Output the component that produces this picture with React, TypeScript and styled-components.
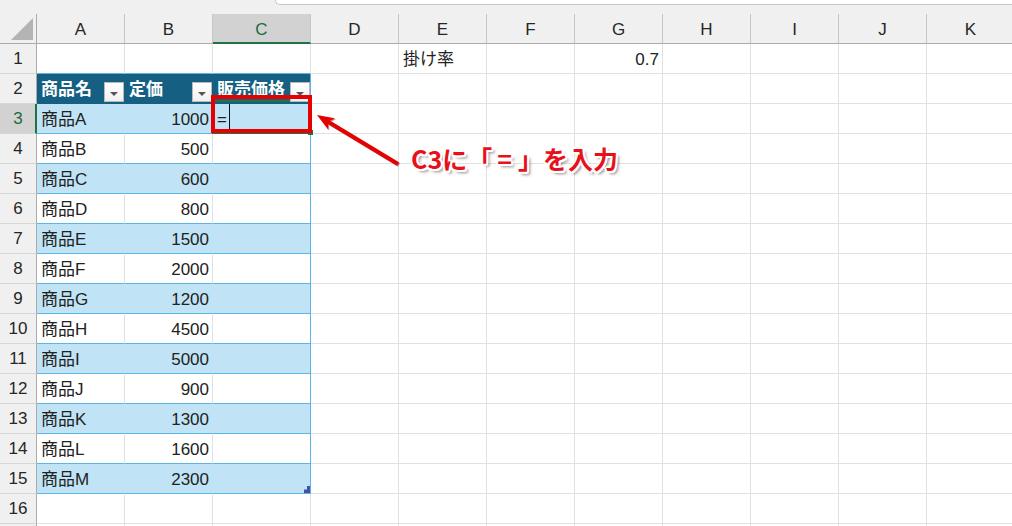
import React from 'react';
import styled, { createGlobalStyle, css } from 'styled-components';

const GlobalStyle = createGlobalStyle`
  html, body { margin: 0; padding: 0; background: #ffffff; }
  body {
    width: 1012px;
    height: 526px;
    overflow: hidden;
    font-family: "Liberation Sans", "Noto Sans CJK JP", sans-serif;
  }
  * { box-sizing: border-box; }
`;

const FONT = `"Liberation Sans", "Noto Sans CJK JP", sans-serif`;
const GREEN = '#217346';
const TABLE_HEAD = '#156082';
const TABLE_BAND = '#c0e4f5';
const TABLE_LINE = '#5cb5e4';
const GRID = '#e1e1e1';
const RED = '#e60000';

const Page = styled.div`
  position: relative;
  width: 1012px;
  height: 526px;
  overflow: hidden;
  background: #ffffff;
`;

const TopStrip = styled.div`
  display: flex;
  height: 14px;
  background: #f0f0f0;
`;

const FormulaEdge = styled.div`
  flex: 1;
  margin-left: 275px;
  height: 5px;
  background: #ffffff;
  border-left: 1px solid #c6c6c6;
  border-bottom: 1px solid #c6c6c6;
  border-bottom-left-radius: 5px;
`;

const Sheet = styled.div`
  display: grid;
  grid-template-columns: 37px 88px 88px 98px repeat(8, 88px);
  grid-auto-rows: 30px;
  font-family: ${FONT};
  font-size: 17px;
  color: #222222;
`;

const Corner = styled.div`
  position: relative;
  background: #f0f0f0;
  border-right: 1px solid #ababab;
  border-bottom: 1px solid #ababab;
`;

const CornerTriangle = styled.span`
  position: absolute;
  left: 11px;
  top: 4px;
  width: 22px;
  height: 22px;
  background: #b4b4b4;
  clip-path: polygon(100% 0, 100% 100%, 0 100%);
`;

const ColHeader = styled.div<{ $selected?: boolean }>`
  display: flex;
  align-items: center;
  justify-content: center;
  padding-top: 2px;
  background: #f0f0f0;
  border-right: 1px solid #c6c6c6;
  border-bottom: 1px solid #ababab;
  color: #262626;
  ${(p) =>
    p.$selected &&
    css`
      background: #d2d2d2;
      color: #1d6a40;
      border-bottom: 2px solid ${GREEN};
      padding-top: 3px;
    `}
`;

const RowHeader = styled.div<{ $selected?: boolean }>`
  display: flex;
  align-items: center;
  justify-content: center;
  padding-top: 1px;
  background: #f0f0f0;
  border-right: 1px solid #ababab;
  border-bottom: 1px solid #d6d6d6;
  color: #262626;
  ${(p) =>
    p.$selected &&
    css`
      background: #d2d2d2;
      color: #1d6a40;
      border-right: 2px solid ${GREEN};
      padding-left: 1px;
    `}
`;

type Kind = 'plain' | 'head' | 'band' | 'row';

const Cell = styled.div<{
  $kind?: Kind;
  $align?: 'left' | 'right';
  $tableEdge?: boolean;
  $aboveTable?: boolean;
}>`
  position: relative;
  display: flex;
  align-items: center;
  justify-content: ${(p) => (p.$align === 'right' ? 'flex-end' : 'flex-start')};
  padding: 1px 3px 0 4px;
  line-height: 1;
  white-space: nowrap;
  background: #ffffff;
  border-right: 1px solid ${GRID};
  border-bottom: 1px solid ${(p) => (p.$aboveTable ? TABLE_LINE : GRID)};
  ${(p) =>
    p.$kind === 'head' &&
    css`
      background: ${TABLE_HEAD};
      color: #ffffff;
      font-weight: 700;
      padding-right: 0;
      justify-content: space-between;
      border-right-color: ${TABLE_HEAD};
      border-bottom-color: ${TABLE_HEAD};
    `}
  ${(p) =>
    p.$kind === 'band' &&
    css`
      background: ${TABLE_BAND};
      border-right-color: ${TABLE_BAND};
      border-bottom-color: ${TABLE_LINE};
    `}
  ${(p) =>
    p.$kind === 'row' &&
    css`
      border-bottom-color: ${TABLE_LINE};
    `}
  ${(p) =>
    p.$tableEdge &&
    css`
      border-right-color: ${TABLE_LINE};
    `}
`;

const FilterButton = styled.span`
  position: relative;
  z-index: 2;
  align-self: flex-end;
  flex: none;
  width: 20px;
  height: 20px;
  margin-bottom: 1px;
  background: linear-gradient(#ffffff, #f1f1f1);
  border: 1px solid #b9b9b9;
  display: flex;
  align-items: center;
  justify-content: center;

  &::after {
    content: '';
    margin-top: 3px;
    border-left: 4px solid transparent;
    border-right: 4px solid transparent;
    border-top: 4px solid #555555;
  }
`;

const Caret = styled.span`
  align-self: stretch;
  width: 1px;
  margin: -1px 0 0 2px;
  background: #111111;
`;

const ResizeHandle = styled.span`
  position: absolute;
  right: 0;
  bottom: 0;
  width: 6px;
  height: 7px;
  background: #4550ab;
  clip-path: polygon(50% 0, 100% 0, 100% 100%, 0 100%, 0 50%, 50% 50%);
`;

const ActiveBorder = styled.div`
  position: absolute;
  z-index: 1;
  left: 212px;
  top: 100px;
  width: 99px;
  height: 34px;
  border: 2px solid ${GREEN};
  pointer-events: none;
`;

const FillHandle = styled.div`
  position: absolute;
  z-index: 1;
  left: 308px;
  top: 130px;
  width: 5px;
  height: 5px;
  background: ${GREEN};
`;

const CalloutBox = styled.div`
  position: absolute;
  z-index: 3;
  left: 211px;
  top: 95px;
  width: 101px;
  height: 38px;
  border: 4px solid ${RED};
  pointer-events: none;
`;

const ArrowLayer = styled.svg`
  position: absolute;
  z-index: 3;
  left: 0;
  top: 0;
  width: 1012px;
  height: 526px;
  pointer-events: none;
  filter: drop-shadow(1px 1px 0.6px rgba(90, 0, 0, 0.45));
`;

const Note = styled.div`
  position: absolute;
  z-index: 3;
  left: 411px;
  top: 145px;
  font-family: "Noto Sans CJK JP", sans-serif;
  font-weight: 700;
  font-size: 25px;
  line-height: 26px;
  color: #e8101a;
  white-space: nowrap;
  text-shadow:
    -2px 0 0 #ffffff,
    2px 0 0 #ffffff,
    0 -2px 0 #ffffff,
    0 2px 0 #ffffff,
    -1.5px -1.5px 0 #ffffff,
    1.5px 1.5px 0 #ffffff,
    -1.5px 1.5px 0 #ffffff,
    1.5px -1.5px 0 #ffffff,
    3px 3px 3px rgba(0, 0, 0, 0.45);
`;

const NoteSign = styled.span`
  margin: 0 6px 0 5px;
`;

const COLUMNS = ['A', 'B', 'C', 'D', 'E', 'F', 'G', 'H', 'I', 'J', 'K'];

const PRODUCTS: [string, number][] = [
  ['商品A', 1000],
  ['商品B', 500],
  ['商品C', 600],
  ['商品D', 800],
  ['商品E', 1500],
  ['商品F', 2000],
  ['商品G', 1200],
  ['商品H', 4500],
  ['商品I', 5000],
  ['商品J', 900],
  ['商品K', 1300],
  ['商品L', 1600],
  ['商品M', 2300],
];

const HEADERS = ['商品名', '定価', '販売価格'];
const LAST_LABELLED_ROW = 16;

function renderRow(r: number) {
  const cells: React.ReactNode[] = [];
  cells.push(
    <RowHeader key={`h${r}`} $selected={r === 3}>
      {r <= LAST_LABELLED_ROW ? r : null}
    </RowHeader>
  );
  COLUMNS.forEach((col, ci) => {
    const key = `${col}${r}`;
    const inTable = ci <= 2 && r >= 2 && r <= 15;
    if (r === 2 && ci <= 2) {
      cells.push(
        <Cell key={key} $kind="head" $tableEdge={ci === 2}>
          <span>{HEADERS[ci]}</span>
          <FilterButton />
        </Cell>
      );
      return;
    }
    if (inTable) {
      const [name, price] = PRODUCTS[r - 3];
      const kind: Kind = r % 2 === 1 ? 'band' : 'row';
      if (ci === 0) {
        cells.push(
          <Cell key={key} $kind={kind}>
            {name}
          </Cell>
        );
      } else if (ci === 1) {
        cells.push(
          <Cell key={key} $kind={kind} $align="right">
            {price}
          </Cell>
        );
      } else {
        cells.push(
          <Cell key={key} $kind={kind} $tableEdge>
            {r === 3 && (
              <>
                <span>=</span>
                <Caret />
              </>
            )}
            {r === 15 && <ResizeHandle />}
          </Cell>
        );
      }
      return;
    }
    if (r === 1 && col === 'E') {
      cells.push(<Cell key={key}>掛け率</Cell>);
      return;
    }
    if (r === 1 && col === 'G') {
      cells.push(
        <Cell key={key} $align="right">
          0.7
        </Cell>
      );
      return;
    }
    cells.push(<Cell key={key} $aboveTable={r === 1 && ci <= 2} />);
  });
  return cells;
}

export default function App() {
  const rows: number[] = [];
  for (let r = 1; r <= 17; r++) rows.push(r);

  return (
    <Page>
      <GlobalStyle />
      <TopStrip>
        <FormulaEdge />
      </TopStrip>
      <Sheet>
        <Corner>
          <CornerTriangle />
        </Corner>
        {COLUMNS.map((c) => (
          <ColHeader key={c} $selected={c === 'C'}>
            {c}
          </ColHeader>
        ))}
        {rows.map((r) => renderRow(r))}
      </Sheet>

      <ActiveBorder />
      <FillHandle />
      <CalloutBox />
      <ArrowLayer viewBox="0 0 1012 526">
        <line x1="398" y1="164" x2="328" y2="121.7" stroke={RED} strokeWidth="4" />
        <polygon points="317,115 334.9,118.2 328.1,121.7 328.1,129.4" fill={RED} />
      </ArrowLayer>
      <Note>
        C3に「<NoteSign>=</NoteSign>」を入力
      </Note>
    </Page>
  );
}
